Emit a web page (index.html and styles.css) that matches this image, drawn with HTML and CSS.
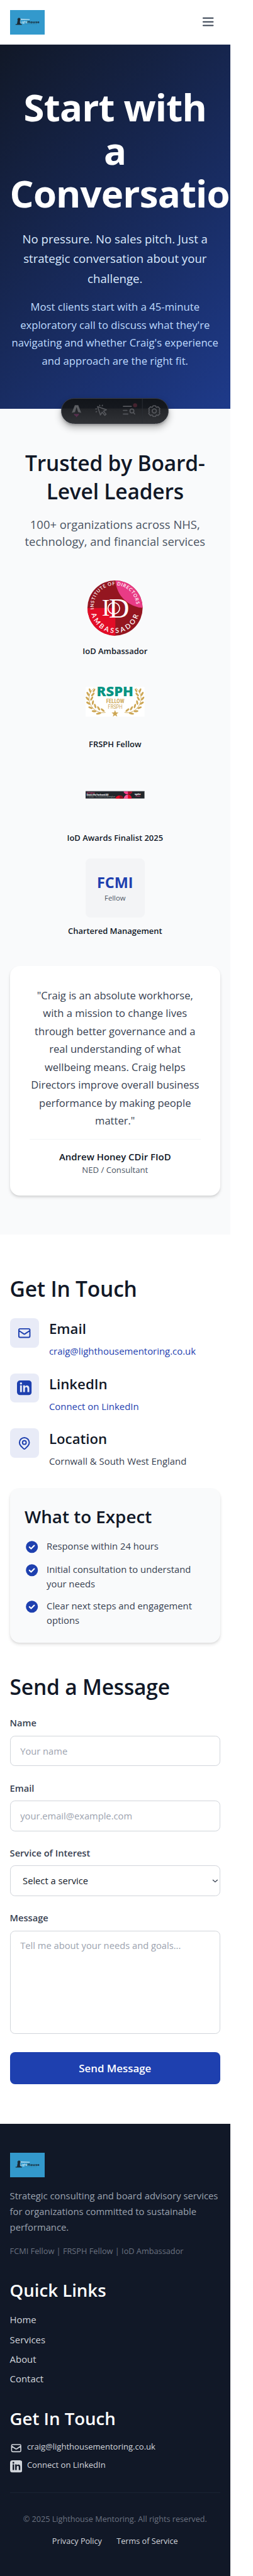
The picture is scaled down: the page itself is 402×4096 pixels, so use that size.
FILE: index.html
```html
<!DOCTYPE html>
<html lang="en">
<head>
<meta charset="utf-8">
<title>Contact | Lighthouse Mentoring</title>
<link rel="stylesheet" href="styles.css">
</head>
<body>
<svg class="defs" aria-hidden="true">
  <symbol id="mail" viewBox="0 0 24 24"><path d="M3 8l7.89 5.26a2 2 0 002.22 0L21 8M5 19h14a2 2 0 002-2V7a2 2 0 00-2-2H5a2 2 0 00-2 2v10a2 2 0 002 2z" fill="none" stroke="currentColor" stroke-width="2" stroke-linecap="round" stroke-linejoin="round"/></symbol>
  <symbol id="linkedin" viewBox="0 0 24 24"><path fill="currentColor" fill-rule="evenodd" d="M5 0h14a5 5 0 0 1 5 5v14a5 5 0 0 1-5 5H5a5 5 0 0 1-5-5V5a5 5 0 0 1 5-5zM8 8H5v11h3V8zM6.500 3.200a1.750 1.750 0 1 0 0 3.540a1.750 1.750 0 1 0 0-3.540zM20 19v-6.400c0-5.400-5.400-5.200-7-2.550V8h-3v11h3v-5.600c0-3.370 4-3.640 4 0V19h3z"/></symbol>
  <symbol id="check" viewBox="0 0 24 24"><circle cx="12" cy="12" r="9.800" fill="#1e40af"/><path d="M8 12.300l2.700 2.600 5.100-5.100" fill="none" stroke="#fff" stroke-width="2.200" stroke-linecap="round" stroke-linejoin="round"/></symbol>
  <symbol id="logo" viewBox="0 0 57 40">
    <rect width="57" height="40" fill="#3399cc"/>
    <path d="M16 14l16 .8v1.400l-16-.4z" fill="#b9dff2"/>
    <path d="M12 14.500l1.500-1.700h2.300l1.300 1.700v1.300h-.8l1 7h2v1.200H9v-1.200h2.300l1.200-7H12z" fill="#1c2a33"/>
    <text class="logo-text" x="15.900" y="21.100" textLength="12.500" fill="#d9f0fb">Light</text>
    <text class="logo-text logo-bold" x="28.200" y="21.100" textLength="19.800" fill="#16222b">House</text>
    <path d="M24 23h20" stroke="#226f96" stroke-width=".5" stroke-dasharray="1 .8"/>
  </symbol>
  <symbol id="branch" viewBox="0 0 36 50">
    <path d="M14 2C5 10 2 22 10 34c6 8 14 12 24 10" fill="none" stroke="#cda654" stroke-width="1"/>
    <g fill="#cda654">
      <ellipse cx="14" cy="6" rx="3.500" ry="1.500" transform="rotate(-60 14 6)"/><ellipse cx="7" cy="6" rx="4" ry="1.600" transform="rotate(70 7 6)"/>
      <ellipse cx="12" cy="13" rx="4" ry="1.600" transform="rotate(-50 12 13)"/><ellipse cx="3.500" cy="12" rx="4" ry="1.700" transform="rotate(60 3.500 12)"/>
      <ellipse cx="10" cy="20" rx="4" ry="1.600" transform="rotate(-60 10 20)"/><ellipse cx="2.500" cy="20" rx="4" ry="1.700" transform="rotate(50 2.500 20)"/>
      <ellipse cx="12" cy="27" rx="4" ry="1.600" transform="rotate(-80 12 27)"/><ellipse cx="4" cy="28" rx="4" ry="1.700" transform="rotate(35 4 28)"/>
      <ellipse cx="16" cy="33" rx="4" ry="1.600" transform="rotate(75 16 33)"/><ellipse cx="8" cy="36" rx="4" ry="1.700" transform="rotate(20 8 36)"/>
      <ellipse cx="22" cy="37" rx="4" ry="1.600" transform="rotate(60 22 37)"/><ellipse cx="14" cy="42" rx="4" ry="1.700" transform="rotate(5 14 42)"/>
      <ellipse cx="29" cy="40" rx="4" ry="1.600" transform="rotate(40 29 40)"/><ellipse cx="22" cy="46" rx="4.500" ry="1.700" transform="rotate(-10 22 46)"/>
    </g>
  </symbol>
</svg>

<div class="page">
  <header class="header">
    <svg class="logo"><use href="#logo"/></svg>
    <svg class="menu" viewBox="0 0 24 24"><path d="M4 6h16M4 12h16M4 18h16" stroke="#374151" stroke-width="2" stroke-linecap="round"/></svg>
  </header>

  <section class="hero">
    <h1>Start with<br>a<br><span class="long-word">Conversation</span></h1>
    <p class="lead">No pressure. No sales pitch. Just a<br>strategic conversation about your<br>challenge.</p>
    <p class="sub">Most clients start with a 45-minute<br>exploratory call to discuss what they're<br>navigating and whether Craig's experience<br>and approach are the right fit.</p>
    <div class="toolbar">
      <svg viewBox="0 0 175 42">
        <path d="M21.500 11.500h5.500l4.800 12.500c-2-.8-4-1.200-5-1.300l-2.500-8-2.600 8c-1 .1-3.200.5-5.200 1.300z" fill="#5c5e62"/>
        <path d="M20 25.500c2 1 6 1 8-.4.300 2-.5 3-2 4l-1.800 2.400-1.500-2.400c-1.700-.5-2.700-2-2.700-3.600z" fill="#58304f"/>
        <g fill="none" stroke="#55575c" stroke-width="1.700" stroke-linejoin="round" stroke-linecap="round">
          <path d="M58.500 13.800l4.600 13.700 3-4.500 4.300 5.200 2-1.800-4.200-5.100 4.800-2.200z"/>
          <path d="M62 11.600l.2 1M66.500 11.600l-.5 1M55.600 17.800l1.200-.3M56 22.500l1-.6"/>
          <path d="M100.500 13.500h13M100.500 20h6M100.500 26h7.500"/>
          <circle cx="114.500" cy="21" r="3.200"/><path d="M117 23.600l2 2.400"/>
          <circle cx="151" cy="21" r="3.400"/>
          <path d="M148.900 12.600h4.200l.8 2 1.200.5 2-.9 3 3-.9 2 .5 1.200v1.900l-.5 1.100.9 2-3 3-2-.9-1.200.5-.8 2h-4.200l-.8-2-1.200-.5-2 .9-3-3 .9-2-.5-1.100v-1.900l.5-1.200-.9-2 3-3 2 .9 1.200-.5z"/>
        </g>
        <circle cx="119.700" cy="11.700" r="3.300" fill="#45232f"/>
        <path d="M131.500 1v40" stroke="#2b2e34"/>
      </svg>
    </div>
  </section>

  <section class="trusted">
    <h2>Trusted by Board-<br>Level Leaders</h2>
    <p class="trusted-sub">100+ organizations across NHS,<br>technology, and financial services</p>
    <div class="badges">
      <div class="badge">
        <svg viewBox="0 0 96 96">
          <defs><clipPath id="disc"><circle cx="48" cy="48" r="45"/></clipPath></defs>
          <g clip-path="url(#disc)">
            <rect width="96" height="96" fill="#941620"/>
            <rect y="48" width="48.500" height="48" fill="#e30d27"/>
            <path d="M48.500 0H96v48C70 47 49 28 48.500 0z" fill="#e93b85"/>
          </g>
          <path id="arc-top" d="M13.500 50a34.800 34.800 0 1 1 69 0" fill="none"/>
          <path id="arc-low" d="M9 55.500a39.500 39.500 0 0 0 78 0" fill="none"/>
          <text class="ring"><textPath href="#arc-top" textLength="110">INSTITUTE OF DIRECTORS</textPath></text>
          <text class="ring ring-big"><textPath href="#arc-low" startOffset="2" textLength="105">AMBASSADOR</textPath></text>
          <text class="iod" x="26.500" y="61" font-size="39">I<tspan x="38" y="64" font-size="46">D</tspan></text>
          <ellipse cx="46" cy="48.500" rx="9.500" ry="9.300" fill="none" stroke="#fff" stroke-width="1.700"/>
        </svg>
        <span>IoD Ambassador</span>
      </div>
      <div class="badge">
        <svg viewBox="0 0 96 96">
          <rect y="24" width="96" height="48.500" fill="#fff"/>
          <use href="#branch" x="0" y="24" width="35" height="47"/>
          <use href="#branch" width="35" height="47" transform="translate(96 24) scale(-1 1)"/>
          <text class="rsph" x="18" y="39.500" textLength="60" lengthAdjust="spacingAndGlyphs">RSPH</text>
          <text class="rsph-sub" x="33.500" y="49.800" textLength="29.500" lengthAdjust="spacingAndGlyphs">FELLOW</text>
          <text class="rsph-sub rsph-thin" x="36.500" y="59" textLength="23.500" lengthAdjust="spacingAndGlyphs">FRSPH</text>
          <path d="M48 61.500l1.500 4 4.200.1-3.300 2.600 1.200 4.200-3.600-2.400-3.600 2.400 1.200-4.200-3.300-2.600 4.200-.1z" fill="#cda654"/>
        </svg>
        <span>FRSPH Fellow</span>
      </div>
      <div class="badge">
        <svg viewBox="0 0 96 96">
          <rect y="42" width="96" height="12" fill="#22262b"/>
          <path d="M62 42h14c0 7-14 7-14 0z" fill="#ff3d8b"/><path d="M69 42h7c0 5-5 6-7 5.500z" fill="#a01028"/>
          <path d="M49 54c0-6.500 12.500-6.500 12.500 0z" fill="#e50d27"/><path d="M55.500 49c4 0 6 2 6 5h-6z" fill="#8f1424"/>
          <path d="M62.500 54c0-8 12.500-8 12.500 0z" fill="#ff5a9c"/><path d="M69 48c4 0 6 3 6 6h-6z" fill="#e50d27"/>
          <path d="M0 42.300h96" stroke="#7d8084" stroke-width=".7"/>
          <text class="tiny" x="1.500" y="46" textLength="13" fill="#e2478a">IoD England</text>
          <text class="tiny tiny-bold" x="1.500" y="49.200" textLength="36" fill="#fff">Director of the Year Awards 2025</text>
          <text class="tiny" x="1.500" y="52.200" textLength="47" fill="#a9abad">17 October · The Grand Hotel Birmingham</text>
          <text class="tiny tiny-bold" x="80" y="48" textLength="10" fill="#fff">together</text>
          <text class="tiny" x="81" y="51" textLength="8" fill="#e2478a">Finalist</text>
        </svg>
        <span>IoD Awards Finalist 2025</span>
      </div>
      <div class="badge">
        <div class="fcmi"><b>FCMI</b><small>Fellow</small></div>
        <span>Chartered Management</span>
      </div>
    </div>
    <div class="quote">
      <p>"Craig is an absolute workhorse,<br>with a mission to change lives<br>through better governance and a<br>real understanding of what<br>wellbeing means. Craig helps<br>Directors improve overall business<br>performance by making people<br>matter."</p>
      <div class="author"><b>Andrew Honey CDir FIoD</b><span>NED / Consultant</span></div>
    </div>
  </section>

  <section class="contact">
    <h2>Get In Touch</h2>
    <div class="methods">
      <div class="method">
        <div class="tile"><svg width="24" height="24"><use href="#mail"/></svg></div>
        <div><h3>Email</h3><a>craig@lighthousementoring.co.uk</a></div>
      </div>
      <div class="method">
        <div class="tile"><svg width="24" height="24"><use href="#linkedin"/></svg></div>
        <div><h3>LinkedIn</h3><a>Connect on LinkedIn</a></div>
      </div>
      <div class="method">
        <div class="tile"><svg width="24" height="24" viewBox="0 0 24 24" fill="none" stroke="currentColor" stroke-width="2" stroke-linecap="round" stroke-linejoin="round"><path d="M17.657 16.657L13.414 20.900a2 2 0 01-2.827 0l-4.244-4.243a8 8 0 1111.314 0z"/><circle cx="12" cy="11" r="3"/></svg></div>
        <div><h3>Location</h3><p class="place">Cornwall &amp; South West England</p></div>
      </div>
    </div>
    <div class="expect">
      <h3>What to Expect</h3>
      <ul>
        <li><svg width="24" height="24"><use href="#check"/></svg><span>Response within 24 hours</span></li>
        <li><svg width="24" height="24"><use href="#check"/></svg><span>Initial consultation to understand<br>your needs</span></li>
        <li><svg width="24" height="24"><use href="#check"/></svg><span>Clear next steps and engagement<br>options</span></li>
      </ul>
    </div>
    <h2 class="send-title">Send a Message</h2>
    <form class="form">
      <label>Name<input type="text" placeholder="Your name"></label>
      <label>Email<input type="text" placeholder="your.email@example.com"></label>
      <label>Service of Interest
        <span class="select"><select><option>Select a service</option></select>
        <svg viewBox="0 0 10 6"><path d="M1 1l4 3.600L9 1" fill="none" stroke="#374151" stroke-width="1.300"/></svg></span>
      </label>
      <label>Message<textarea placeholder="Tell me about your needs and goals..."></textarea></label>
      <button type="button">Send Message</button>
    </form>
  </section>

  <footer class="footer">
    <svg class="logo"><use href="#logo"/></svg>
    <p class="about">Strategic consulting and board advisory services<br>for organizations committed to sustainable<br>performance.</p>
    <p class="creds">FCMI Fellow | FRSPH Fellow | IoD Ambassador</p>
    <h3>Quick Links</h3>
    <nav class="links"><a>Home</a><a>Services</a><a>About</a><a>Contact</a></nav>
    <h3>Get In Touch</h3>
    <div class="reach">
      <a><svg width="20" height="20"><use href="#mail"/></svg><span>craig@lighthousementoring.co.uk</span></a>
      <a><svg width="20" height="20"><use href="#linkedin"/></svg><span>Connect on LinkedIn</span></a>
    </div>
    <div class="legal">
      <p>© 2025 Lighthouse Mentoring. All rights reserved.</p>
      <div><a>Privacy Policy</a><a>Terms of Service</a></div>
    </div>
  </footer>
</div>
</body>
</html>
```
FILE: styles.css
```css
* { box-sizing: border-box; }
html { overflow: hidden; background: #fff; }
body { margin: 0; }
h1, h2, h3, p, ul { margin: 0; padding: 0; }
h1, h2, h3, p, a, span { white-space: nowrap; }
svg { display: block; flex: none; }
.defs { display: none; }

.page {
  zoom: 0.97477;
  width: 375px;
  font-family: "Open Sans", "Noto Sans", sans-serif;
  font-size: 15.2px;
  line-height: 24px;
  color: #111827;
}

h2 { font-size: 34.4px; line-height: 46.8px; font-weight: 600; letter-spacing: -0.2px; padding-top: 1.5px; margin-bottom: -1.5px; }
h3 { font-weight: 600; }

.header { height: 73px; padding: 0 16px; border-bottom: 1px solid #e5e7eb; display: flex; align-items: center; justify-content: space-between; background: #fff; }
.logo { width: 57px; height: 40px; }
.logo-text { font: 6px "Open Sans", sans-serif; }
.logo-bold { font-weight: 700; }
.menu { width: 24px; height: 24px; margin-right: 8px; }

.hero { position: relative; height: 593.7px; padding: 64px 16px; text-align: center; color: #fff; background: linear-gradient(135deg, #111827 0%, #1e3a8a 100%); }
h1 { font-size: 61.4px; line-height: 70.4px; font-weight: 700; letter-spacing: -0.85px; padding-top: 2.5px; margin-bottom: 21.5px; }
.long-word { display: block; text-align: left; }
.lead { font-size: 19.1px; line-height: 32.5px; color: #dbeafe; padding-top: 1px; margin-bottom: 15px; }
.sub { font-size: 17.1px; line-height: 29.25px; color: #bfdbfe; padding-top: 1px; }

.toolbar { position: absolute; left: 100px; bottom: -24.5px; width: 175px; height: 42px; border-radius: 21px; border: 1px solid #383b42; background: linear-gradient(180deg, #12151a 0%, #15181e 38%, #232529 42%, #303236 100%); box-shadow: 0 6px 12px rgba(0, 0, 0, 0.3), 0 2px 4px rgba(0, 0, 0, 0.2); z-index: 2; }
.toolbar svg { width: 175px; height: 42px; margin: -1px; }

.trusted { background: #f9fafb; padding: 64px 16px; text-align: center; }
.trusted-sub { font-size: 18.9px; line-height: 28px; color: #4b5563; padding-top: 17px; margin: 0 0 47px; }
.badges { display: flex; flex-direction: column; align-items: center; gap: 24px; }
.badge > svg { width: 96px; height: 96px; margin: 0 auto; }
.badge > span { display: block; font-size: 13.3px; line-height: 20px; font-weight: 600; padding-top: 12.6px; margin-bottom: -0.6px; }
.ring { font: 600 7.6px "Lato", sans-serif; fill: #fff; }
.ring-big { font-size: 11px; }
.iod { font-family: "Liberation Serif", serif; fill: #fff; }
.rsph { font: 800 21px "Open Sans", sans-serif; fill: #069483; }
.rsph-sub { font: 700 9px "Roboto", sans-serif; fill: #cda654; }
.rsph-thin { font-weight: 400; }
.tiny { font: 2.7px "Open Sans", sans-serif; }
.tiny-bold { font-weight: 700; }
.fcmi { width: 96px; height: 96px; margin: 0 auto; border-radius: 8px; background: #f3f4f6; display: flex; flex-direction: column; align-items: center; justify-content: center; }
.fcmi b { font-size: 24px; line-height: 32px; color: #1e40af; }
.fcmi small { font-size: 11.6px; line-height: 16px; color: #4b5563; }

.quote { margin-top: 48px; padding: 32px; background: #fff; border-radius: 16px; box-shadow: 0 4px 6px -1px rgba(0, 0, 0, 0.1), 0 2px 4px -2px rgba(0, 0, 0, 0.1); }
.quote p { font-size: 17px; line-height: 29.25px; color: #374151; padding-top: 1px; margin-bottom: 15px; }
.author { border-top: 2px solid #f3f4f6; padding-top: 15.7px; }
.author b, .author span { display: block; }
.author b { font-size: 15.35px; font-weight: 600; }
.author span { font-size: 13.5px; line-height: 20px; color: #4b5563; margin-bottom: -0.7px; }

.contact { padding: 64px 16px; background: #fff; }
.methods { display: flex; flex-direction: column; gap: 24px; margin-top: 25.5px; }
.method { display: flex; gap: 16px; height: 65.6px; }
.tile { width: 48px; height: 48px; border-radius: 8px; background: #e8ebf7; color: #1e40af; display: flex; align-items: center; justify-content: center; }
.method h3 { font-size: 22.8px; line-height: 33.6px; padding-top: 1px; margin-bottom: 7.6px; }
.method a, .place { display: block; color: #1e40af; font-size: 15.3px; }
.place { color: #374151; }

.expect { margin-top: 32px; padding: 24px; border-radius: 16px; background: #f9fafb; box-shadow: 0 4px 6px -1px rgba(0, 0, 0, 0.1), 0 2px 4px -2px rgba(0, 0, 0, 0.1); }
.expect h3 { font-size: 28.5px; line-height: 42px; padding-top: 1.3px; margin-bottom: 14.7px; }
ul { list-style: none; display: flex; flex-direction: column; gap: 12px; }
li { display: flex; gap: 12px; color: #374151; }
li svg { margin-top: 2px; }
li span { padding-top: 0.6px; margin-bottom: -0.6px; }
.send-title { margin-top: 48px; }

.form { margin-top: 25px; display: flex; flex-direction: column; gap: 24px; }
.form label { display: block; font-size: 15px; font-weight: 600; line-height: 24px; color: #374151; }
.form input, .form textarea, .form select { display: block; width: 100%; margin: 8px 0 0; padding: 12px 16px; height: 50px; border: 1px solid #d1d5db; border-radius: 8px; background: #fff; font: 15.1px/24px "Open Sans", sans-serif; color: #111827; appearance: none; outline: none; resize: none; }
.form textarea { height: 169px; overflow: hidden; }
.form select { padding-left: 20px; }
.form ::placeholder { color: #9ca3af; opacity: 1; }
.select { position: relative; display: block; }
.select svg { position: absolute; right: 3px; top: 22px; width: 10px; height: 6px; }
.form button { height: 52.6px; margin-top: 5.5px; padding: 0; border: 0; border-radius: 8px; background: #1e40af; color: #fff; font: 600 17.3px/24px "Open Sans", sans-serif; }

.footer { background: #111827; padding: 48px 16px; color: #d1d5db; }
.about { margin-top: 16px; line-height: 26px; color: #9ca3af; padding-top: 0.6px; }
.creds { margin-top: 15.4px; font-size: 13.1px; line-height: 20px; color: #6b7280; padding-top: 0.5px; }
.footer h3 { font-size: 28.3px; line-height: 42px; color: #fff; padding-top: 1.3px; margin-top: 31.5px; margin-bottom: 14.7px; }
.links { display: flex; flex-direction: column; gap: 8px; font-size: 15.3px; padding-top: 0.6px; margin-bottom: -0.6px; }
.reach { display: flex; flex-direction: column; gap: 8px; font-size: 13.4px; line-height: 20px; }
.reach a { display: flex; gap: 8px; height: 22px; }
.reach svg { margin-top: 2px; }
.legal { margin-top: 32px; padding-top: 32px; border-top: 1px solid #1a2433; text-align: center; font-size: 13px; line-height: 20px; }
.legal p { color: #6b7280; padding-top: 0.5px; }
.legal div { display: flex; justify-content: center; gap: 24px; margin-top: 16px; }
```
